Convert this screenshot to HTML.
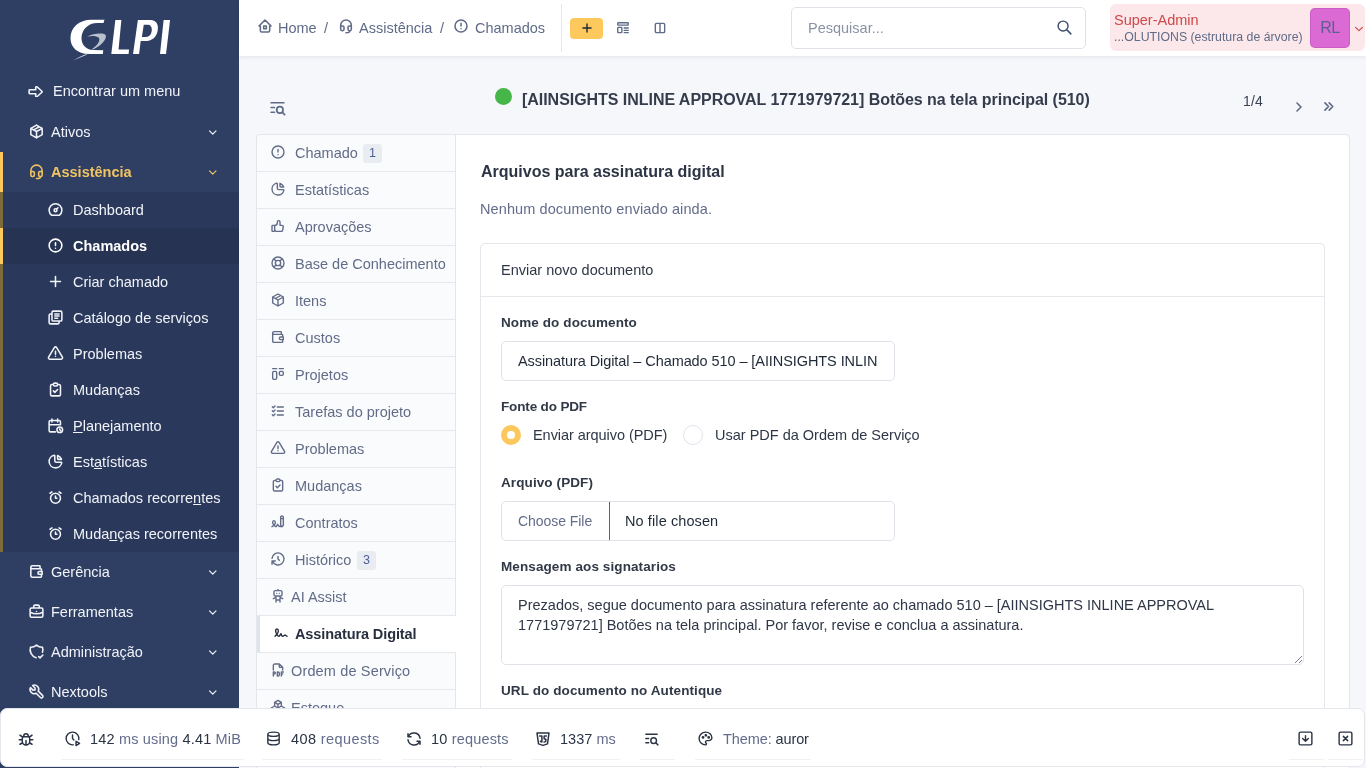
<!DOCTYPE html>
<html><head><meta charset="utf-8">
<style>
*{box-sizing:border-box;margin:0;padding:0}
html,body{will-change:transform;width:1366px;height:768px;overflow:hidden;background:#f5f7fb;font-family:"Liberation Sans",sans-serif;font-size:14.5px;color:#1f2937}
.abs{position:absolute}
svg.i{position:absolute;fill:none;stroke:currentColor;stroke-width:2;stroke-linecap:round;stroke-linejoin:round}
#side{position:absolute;left:0;top:0;width:239px;height:768px;background:#2f3f64;color:#f1f3f8}
.mi{position:absolute;left:0;width:239px;height:40px;line-height:40px;white-space:nowrap}
.mi span{position:absolute;left:51px}
.mi svg.i{left:27.5px;top:11px;width:17px;height:17px;stroke-width:2.2}
.mi svg.chev{position:absolute;left:209px;top:18px;width:7.5px;height:5px;stroke-width:2.3}
#sub{position:absolute;left:0;top:192px;width:239px;height:360px;background:#2a395b;border-left:3px solid #7d6b3b}
.si{position:absolute;left:0;width:236px;height:36px;line-height:36px;white-space:nowrap}
.si span{position:absolute;left:70px}
.si svg.i{left:44px;top:9px;width:17px;height:17px;stroke-width:2.2}
#hdr{position:absolute;left:239px;top:0;width:1127px;height:56px;background:#fff;box-shadow:0 1px 4px rgba(30,41,59,.09)}
.bc{position:absolute;top:0;line-height:56px;color:#5f6b87;white-space:nowrap}

.tabs{position:absolute;left:256px;top:134px;width:200px;height:640px;border:1px solid #e3e6eb;border-right:none;border-radius:4px 0 0 0;background:#fafbfc;overflow:hidden}
.tab{position:absolute;left:0;width:199px;height:37px;border-bottom:1px solid #e6e8ec;line-height:36px;color:#626c88;white-space:nowrap}
.tab span{position:absolute;left:38px}
.tab svg.i{left:13px;top:9px;width:16px;height:16px;stroke-width:2.1}
.badge{position:absolute;top:9px;height:19px;line-height:19px;padding:0 6px;border-radius:3px;background:#e9ecf1;color:#4b5f98;font-size:12.5px}
#card{position:absolute;left:455px;top:134px;width:895px;height:700px;background:#fff;border:1px solid #e3e6eb;border-radius:0 5px 0 0}
.lbl{position:absolute;left:45px;font-weight:bold;font-size:13.5px;line-height:20px;color:#313947;white-space:nowrap;letter-spacing:.1px}
.inp{position:absolute;border:1px solid #dfe3e9;border-radius:5px;background:#fff;white-space:nowrap;overflow:hidden;color:#1f2937}
</style></head><body>
<div id="side">
  <svg class="abs" style="left:65px;top:14px" width="110" height="52" viewBox="0 0 1366 646">
    <path fill="#fff" d="M490 72 L478 112 L400 112 C290 112 210 190 205 290 C200 380 260 445 350 448 L475 450 L470 497 L300 497 C150 495 68 410 68 300 C68 170 170 72 330 72 Z"/>
    <path fill="#b9c0cd" d="M275 282 C350 240 470 230 505 260 C525 300 460 390 350 440 L330 440 C420 380 440 320 420 295 C390 270 330 270 275 282 Z"/>
    <path fill="#c9cfdb" d="M100 578 C160 540 220 510 290 490 L250 515 C200 535 150 558 100 578 Z"/>
    <path fill="#fff" d="M625 75 L700 75 L665 440 L795 440 L790 497 L575 497 Z"/>
    <path fill="#fff" fill-rule="evenodd" d="M905 75 L1060 75 C1140 75 1165 140 1150 210 C1135 290 1080 335 990 335 L940 335 L920 497 L845 497 Z M978 135 L955 285 L1005 285 C1060 285 1075 240 1078 200 C1080 160 1060 135 1030 135 Z"/>
    <path fill="#fff" d="M1225 75 L1305 75 L1255 497 L1180 497 Z"/>
  </svg>

  <div class="mi" style="top:71px"><svg class="i" style="height:11.5px;top:14.5px;left:28px;width:15.5px" preserveAspectRatio="none" viewBox="1.5 3.5 21 17"><path d="M4 9h8v-3.586a1 1 0 0 1 1.707 -.707l6.586 6.586a1 1 0 0 1 0 1.414l-6.586 6.586a1 1 0 0 1 -1.707 -.707v-3.586h-8a1 1 0 0 1 -1 -1v-4a1 1 0 0 1 1 -1z"/></svg><span style="left:53px">Encontrar um menu</span></div>
  <div class="mi" style="top:112px"><svg class="i" viewBox="0 0 24 24"><path d="M12 3l8 4.5l0 9l-8 4.5l-8 -4.5l0 -9l8 -4.5M12 12l8 -4.5M12 12l0 9M12 12l-8 -4.5M16 5.25l-8 4.5"/></svg><span>Ativos</span><svg class="i chev" viewBox="5 8 14 8"><path d="M6 9l6 6l6 -6"/></svg></div>
  <div class="mi" style="top:152px;color:#f2c461;font-weight:bold"><div class="abs" style="left:0;top:0;width:3px;height:40px;background:#fec95c"></div><svg class="i" viewBox="0 0 24 24"><path d="M4 14v-3a8 8 0 1 1 16 0v3M18 19c0 1.657 -2.686 3 -6 3M4 14a2 2 0 0 1 2 -2h1a2 2 0 0 1 2 2v3a2 2 0 0 1 -2 2h-1a2 2 0 0 1 -2 -2v-3zM15 14a2 2 0 0 1 2 -2h1a2 2 0 0 1 2 2v3a2 2 0 0 1 -2 2h-1a2 2 0 0 1 -2 -2v-3z"/></svg><span>Assistência</span><svg class="i chev" viewBox="5 8 14 8"><path d="M6 9l6 6l6 -6"/></svg></div>
  <div id="sub">
    <div class="si" style="top:0"><svg class="i" viewBox="0 0 24 24"><path d="M10 13a2 2 0 1 0 4 0a2 2 0 1 0 -4 0M13.45 11.55l2.05 -2.05M6.4 20a9 9 0 1 1 11.2 0z"/></svg><span>Dashboard</span></div>
    <div class="si" style="top:36px;background:#263352;font-weight:bold;color:#fff"><div class="abs" style="left:-3px;top:0;width:3px;height:36px;background:#fec95c"></div><svg class="i" viewBox="0 0 24 24"><path d="M3 12a9 9 0 1 0 18 0a9 9 0 0 0 -18 0M12 8v4M12 16h.01"/></svg><span>Chamados</span></div>
    <div class="si" style="top:72px"><svg class="i" viewBox="0 0 24 24"><path d="M12 5l0 14M5 12l14 0"/></svg><span>Criar chamado</span></div>
    <div class="si" style="top:108px"><svg class="i" viewBox="0 0 24 24"><path d="M9 3h10a2 2 0 0 1 2 2v10a2 2 0 0 1 -2 2h-10a2 2 0 0 1 -2 -2v-10a2 2 0 0 1 2 -2zM17 17v2a2 2 0 0 1 -2 2h-10a2 2 0 0 1 -2 -2v-10a2 2 0 0 1 2 -2h2M11 7h6M11 10h6M11 13h4"/></svg><span>Catálogo de serviços</span></div>
    <div class="si" style="top:144px"><svg class="i" viewBox="0 0 24 24"><path d="M12 9v4M10.363 3.591l-8.106 13.534a1.914 1.914 0 0 0 1.636 2.871h16.214a1.914 1.914 0 0 0 1.636 -2.87l-8.106 -13.536a1.914 1.914 0 0 0 -3.274 0zM12 16h.01"/></svg><span>Problemas</span></div>
    <div class="si" style="top:180px"><svg class="i" viewBox="0 0 24 24"><path d="M9 5h-2a2 2 0 0 0 -2 2v12a2 2 0 0 0 2 2h10a2 2 0 0 0 2 -2v-12a2 2 0 0 0 -2 -2h-2M11 3h2a2 2 0 0 1 2 2a2 2 0 0 1 -2 2h-2a2 2 0 0 1 -2 -2a2 2 0 0 1 2 -2zM9 14l2 2l4 -4"/></svg><span>Mudanças</span></div>
    <div class="si" style="top:216px"><svg class="i" viewBox="0 0 24 24"><path d="M11.795 21h-6.795a2 2 0 0 1 -2 -2v-12a2 2 0 0 1 2 -2h12a2 2 0 0 1 2 2v4M14 18a4 4 0 1 0 8 0a4 4 0 1 0 -8 0M15 3v4M7 3v4M3 11h16M18 16.496v1.504l1 1"/></svg><span><u>P</u>lanejamento</span></div>
    <div class="si" style="top:252px"><svg class="i" viewBox="0 0 24 24"><path d="M10 3.2a9 9 0 1 0 10.8 10.8a1 1 0 0 0 -1 -1h-6.8a2 2 0 0 1 -2 -2v-7a.9 .9 0 0 0 -1 -.8M15 3.5a9 9 0 0 1 5.5 5.5h-4.5a1 1 0 0 1 -1 -1v-4.5"/></svg><span>Est<u>a</u>tísticas</span></div>
    <div class="si" style="top:288px"><svg class="i" viewBox="0 0 24 24"><path d="M5 13a7 7 0 1 0 14 0a7 7 0 1 0 -14 0M12 10l0 3l2 0M7 4l-2.75 2M17 4l2.75 2"/></svg><span>Chamados recorre<u>n</u>tes</span></div>
    <div class="si" style="top:324px"><svg class="i" viewBox="0 0 24 24"><path d="M5 13a7 7 0 1 0 14 0a7 7 0 1 0 -14 0M12 10l0 3l2 0M7 4l-2.75 2M17 4l2.75 2"/></svg><span>Muda<u>n</u>ças recorrentes</span></div>
  </div>
  <div class="mi" style="top:552px"><svg class="i" viewBox="0 0 24 24"><path d="M17 8v-3a1 1 0 0 0 -1 -1h-10a2 2 0 0 0 0 4h12a1 1 0 0 1 1 1v3m0 4v3a1 1 0 0 1 -1 1h-12a2 2 0 0 1 -2 -2v-12M20 12v4h-4a2 2 0 0 1 0 -4h4"/></svg><span>Gerência</span><svg class="i chev" viewBox="5 8 14 8"><path d="M6 9l6 6l6 -6"/></svg></div>
  <div class="mi" style="top:592px"><svg class="i" viewBox="0 0 24 24"><path d="M5 7h14a2 2 0 0 1 2 2v9a2 2 0 0 1 -2 2h-14a2 2 0 0 1 -2 -2v-9a2 2 0 0 1 2 -2zM8 7v-2a2 2 0 0 1 2 -2h4a2 2 0 0 1 2 2v2M12 12l0 .01M3 13a20 20 0 0 0 18 0"/></svg><span>Ferramentas</span><svg class="i chev" viewBox="5 8 14 8"><path d="M6 9l6 6l6 -6"/></svg></div>
  <div class="mi" style="top:632px"><svg class="i" viewBox="0 0 24 24"><path d="M11.46 20.846a12 12 0 0 1 -7.96 -14.846a12 12 0 0 0 8.5 -3a12 12 0 0 0 8.5 3a12 12 0 0 1 -.09 7.06M15 19l2 2l4 -4"/></svg><span>Administração</span><svg class="i chev" viewBox="5 8 14 8"><path d="M6 9l6 6l6 -6"/></svg></div>
  <div class="mi" style="top:672px"><svg class="i" viewBox="0 0 24 24"><path d="M7 10h3v-3l-3.5 -3.5a6 6 0 0 1 8 8l6 6a2 2 0 0 1 -3 3l-6 -6a6 6 0 0 1 -8 -8l3.5 3.5"/></svg><span>Nextools</span><svg class="i chev" viewBox="5 8 14 8"><path d="M6 9l6 6l6 -6"/></svg></div>
</div>
<div id="hdr">
  <svg class="i" style="left:18px;top:18px;width:16px;height:16px;color:#5f6b87;stroke-width:2.3" viewBox="0 0 24 24"><path d="M5 12l-2 0l9 -9l9 9l-2 0M5 12v7a2 2 0 0 0 2 2h10a2 2 0 0 0 2 -2v-7M10 12h4v4h-4z"/></svg>
  <div class="bc" style="left:39px">Home</div>
  <div class="bc" style="left:85px">/</div>
  <svg class="i" style="left:99px;top:18px;width:16px;height:16px;color:#5f6b87;stroke-width:2.3" viewBox="0 0 24 24"><path d="M4 14v-3a8 8 0 1 1 16 0v3M18 19c0 1.657 -2.686 3 -6 3M4 14a2 2 0 0 1 2 -2h1a2 2 0 0 1 2 2v3a2 2 0 0 1 -2 2h-1a2 2 0 0 1 -2 -2v-3zM15 14a2 2 0 0 1 2 -2h1a2 2 0 0 1 2 2v3a2 2 0 0 1 -2 2h-1a2 2 0 0 1 -2 -2v-3z"/></svg>
  <div class="bc" style="left:120px">Assistência</div>
  <div class="bc" style="left:201px">/</div>
  <svg class="i" style="left:214px;top:18px;width:16px;height:16px;color:#5f6b87;stroke-width:2.3" viewBox="0 0 24 24"><path d="M3 12a9 9 0 1 0 18 0a9 9 0 0 0 -18 0M12 8v4M12 16h.01"/></svg>
  <div class="bc" style="left:236px">Chamados</div>
  <div class="abs" style="left:322px;top:4px;width:1px;height:48px;background:#e5e6e8"></div>
  <div class="abs" style="left:331px;top:18px;width:33px;height:21px;background:#fec95c;border-radius:4px"></div>
  <svg class="i" style="left:341px;top:21px;width:14px;height:14px;color:#1f2937;stroke-width:2.4" viewBox="0 0 24 24"><path d="M12 5l0 14M5 12l14 0"/></svg>
  <svg class="i" style="left:377px;top:21px;width:14px;height:14px;color:#5f6b87;stroke-width:2.4" viewBox="0 0 24 24"><path d="M4 3h16a1 1 0 0 1 1 1v2a1 1 0 0 1 -1 1h-16a1 1 0 0 1 -1 -1v-2a1 1 0 0 1 1 -1zM4 11h5a1 1 0 0 1 1 1v7a1 1 0 0 1 -1 1h-5a1 1 0 0 1 -1 -1v-7a1 1 0 0 1 1 -1zM14 12h7M14 16h7M14 20h7"/></svg>
  <svg class="i" style="left:414px;top:21px;width:14px;height:14px;color:#5f6b87;stroke-width:2.4" viewBox="0 0 24 24"><path d="M6 4h12a2 2 0 0 1 2 2v12a2 2 0 0 1 -2 2h-12a2 2 0 0 1 -2 -2v-12a2 2 0 0 1 2 -2zM12 4l0 16"/></svg>
  <div class="abs" style="left:552px;top:7px;width:295px;height:42px;border:1px solid #dfe3e9;border-radius:5px;background:#fff"></div>
  <div class="abs" style="left:569px;top:0;line-height:56px;color:#8a93a6">Pesquisar...</div>
  <svg class="i" style="left:817px;top:19px;width:17px;height:17px;color:#3a4b70" viewBox="0 0 24 24"><path d="M3 10a7 7 0 1 0 14 0a7 7 0 1 0 -14 0M21 21l-6 -6"/></svg>
  <div class="abs" style="left:871px;top:4px;width:255px;height:47px;background:#fce8ea;border-radius:6px"></div>
  <div class="abs" style="left:875px;top:10px;line-height:20px;color:#d04848;white-space:nowrap">Super-Admin</div>
  <div class="abs" style="left:875px;top:29px;line-height:16px;font-size:12.3px;color:#5f6b87;white-space:nowrap">...OLUTIONS (estrutura de árvore)</div>
  <div class="abs" style="left:1071px;top:8px;width:40px;height:40px;background:#db6ad4;border-radius:5px;box-shadow:inset 0 0 0 1px rgba(160,50,150,.25);color:#5a6192;font-size:16px;letter-spacing:-.6px;line-height:40px;text-align:center">RL</div>
  <svg class="i" style="left:1116px;top:26px;width:8px;height:6px;color:#d04848" viewBox="5 8 14 8"><path d="M6 9l6 6l6 -6"/></svg>
</div>
<div class="abs" style="left:495px;top:88px;width:17px;height:17px;border-radius:50%;background:#47b649"></div>
<div class="abs" style="left:522px;top:86px;line-height:28px;font-size:16px;font-weight:bold;color:#353d4d;white-space:nowrap;letter-spacing:-.04px">[AIINSIGHTS INLINE APPROVAL 1771979721] Botões na tela principal (510)</div>
<div class="abs" style="left:1243px;top:91px;line-height:20px;color:#3a4252;font-size:14px;letter-spacing:.2px">1/4</div>
<svg class="i" style="left:1291px;top:99px;width:16px;height:16px;color:#5f6b87;stroke-width:2.4" viewBox="0 0 24 24"><path d="M9 6l6 6l-6 6"/></svg>
<svg class="i" style="left:1320px;top:98px;width:17px;height:17px;color:#5f6b87;stroke-width:2.4" viewBox="0 0 24 24"><path d="M7 7l5 5l-5 5M13 7l5 5l-5 5"/></svg>
<svg class="i" style="left:268px;top:98px;width:19px;height:19px;color:#5f6b87;stroke-width:2.2" viewBox="0 0 24 24"><path d="M11 15a4 4 0 1 0 8 0a4 4 0 1 0 -8 0M18.5 18.5l2.5 2.5M4 6h16M4 12h4M4 18h4"/></svg>
<div class="tabs">
  <div class="tab" style="top:0px"><svg class="i" viewBox="0 0 24 24"><path d="M3 12a9 9 0 1 0 18 0a9 9 0 0 0 -18 0M12 8v4M12 16h.01"/></svg><span>Chamado</span><div class="badge" style="left:106px">1</div></div>
  <div class="tab" style="top:37px"><svg class="i" viewBox="0 0 24 24"><path d="M10 3.2a9 9 0 1 0 10.8 10.8a1 1 0 0 0 -1 -1h-6.8a2 2 0 0 1 -2 -2v-7a.9 .9 0 0 0 -1 -.8M15 3.5a9 9 0 0 1 5.5 5.5h-4.5a1 1 0 0 1 -1 -1v-4.5"/></svg><span>Estatísticas</span></div>
  <div class="tab" style="top:74px"><svg class="i" viewBox="0 0 24 24"><path d="M7 11v8a1 1 0 0 1 -1 1h-2a1 1 0 0 1 -1 -1v-7a1 1 0 0 1 1 -1h3a4 4 0 0 0 4 -4v-1a2 2 0 0 1 4 0v5h3a2 2 0 0 1 2 2l-1 5a2 3 0 0 1 -2 2h-7a3 3 0 0 1 -3 -3"/></svg><span>Aprovações</span></div>
  <div class="tab" style="top:111px"><svg class="i" viewBox="0 0 24 24"><path d="M8 12a4 4 0 1 0 8 0a4 4 0 1 0 -8 0M3 12a9 9 0 1 0 18 0a9 9 0 1 0 -18 0M15 15l3.35 3.35M9 15l-3.35 3.35M5.65 5.65l3.35 3.35M18.35 5.65l-3.35 3.35"/></svg><span>Base de Conhecimento</span></div>
  <div class="tab" style="top:148px"><svg class="i" viewBox="0 0 24 24"><path d="M12 3l8 4.5l0 9l-8 4.5l-8 -4.5l0 -9l8 -4.5M12 12l8 -4.5M12 12l0 9M12 12l-8 -4.5M16 5.25l-8 4.5"/></svg><span>Itens</span></div>
  <div class="tab" style="top:185px"><svg class="i" viewBox="0 0 24 24"><path d="M17 8v-3a1 1 0 0 0 -1 -1h-10a2 2 0 0 0 0 4h12a1 1 0 0 1 1 1v3m0 4v3a1 1 0 0 1 -1 1h-12a2 2 0 0 1 -2 -2v-12M20 12v4h-4a2 2 0 0 1 0 -4h4"/></svg><span>Custos</span></div>
  <div class="tab" style="top:222px"><svg class="i" viewBox="0 0 24 24"><path d="M4 4l6 0M14 4l6 0M6 8h2a2 2 0 0 1 2 2v8a2 2 0 0 1 -2 2h-2a2 2 0 0 1 -2 -2v-8a2 2 0 0 1 2 -2zM16 8h2a2 2 0 0 1 2 2v2a2 2 0 0 1 -2 2h-2a2 2 0 0 1 -2 -2v-2a2 2 0 0 1 2 -2z"/></svg><span>Projetos</span></div>
  <div class="tab" style="top:259px"><svg class="i" viewBox="0 0 24 24"><path d="M3.5 5.5l1.5 1.5l2.5 -2.5M3.5 11.5l1.5 1.5l2.5 -2.5M3.5 17.5l1.5 1.5l2.5 -2.5M11 6l9 0M11 12l9 0M11 18l9 0"/></svg><span>Tarefas do projeto</span></div>
  <div class="tab" style="top:296px"><svg class="i" viewBox="0 0 24 24"><path d="M12 9v4M10.363 3.591l-8.106 13.534a1.914 1.914 0 0 0 1.636 2.871h16.214a1.914 1.914 0 0 0 1.636 -2.87l-8.106 -13.536a1.914 1.914 0 0 0 -3.274 0zM12 16h.01"/></svg><span>Problemas</span></div>
  <div class="tab" style="top:333px"><svg class="i" viewBox="0 0 24 24"><path d="M9 5h-2a2 2 0 0 0 -2 2v12a2 2 0 0 0 2 2h10a2 2 0 0 0 2 -2v-12a2 2 0 0 0 -2 -2h-2M11 3h2a2 2 0 0 1 2 2a2 2 0 0 1 -2 2h-2a2 2 0 0 1 -2 -2a2 2 0 0 1 2 -2zM9 14l2 2l4 -4"/></svg><span>Mudanças</span></div>
  <div class="tab" style="top:370px"><svg class="i" viewBox="0 0 24 24"><path d="M3 19c3.333 -2 5 -4 5 -6c0 -3 -1 -3 -2 -3s-2.032 1.085 -2 3c.034 2.048 1.658 2.877 2.5 4c1.5 2 2.5 2.5 3.5 1c.667 -1 1.167 -1.833 1.5 -2.5c1 2.333 2.333 3.5 4 3.5h2.5M20 17v-12c0 -1.121 -.879 -2 -2 -2s-2 .879 -2 2v12l2 2l2 -2zM16 7h4"/></svg><span>Contratos</span></div>
  <div class="tab" style="top:407px"><svg class="i" viewBox="0 0 24 24"><path d="M12 8l0 4l2 2M3.05 11a9 9 0 1 1 .5 4m-.5 5v-5h5"/></svg><span>Histórico</span><div class="badge" style="left:100px">3</div></div>
  <div class="tab" style="top:444px"><svg class="i" viewBox="0 0 24 24"><path d="M8 4h8a2 2 0 0 1 2 2v4a2 2 0 0 1 -2 2h-8a2 2 0 0 1 -2 -2v-4a2 2 0 0 1 2 -2zM12 2v2M9 12v9M15 12v9M5 16l4 -2M15 14l4 2M9 18h6M10 8v.01M14 8v.01"/></svg><span style="left:34px">AI Assist</span></div>
  <div class="tab" style="top:481px;height:37px;width:200px;background:#fff;border-bottom:1px solid #e6e8ec;border-left:4px solid #dfe3ea;color:#283040;font-weight:bold;left:-1px"><svg class="i" style="left:13px" viewBox="0 0 24 24"><path d="M3 17c3.333 -3.333 5 -6 5 -8c0 -3 -1 -3 -2 -3s-2.032 1.085 -2 3c.034 2.048 1.658 4.877 2.5 6c1.5 2 2.5 2.5 3.5 1l2 -3c.333 2.667 1.333 4 3 4c.53 0 2.639 -2 3 -2c.517 0 1.517 .667 3 2"/></svg><span style="left:35px;letter-spacing:-.1px">Assinatura Digital</span></div>
  <div class="tab" style="top:518px"><svg class="i" viewBox="0 0 24 24"><path d="M14 3v4a1 1 0 0 0 1 1h4M5 12v-7a2 2 0 0 1 2 -2h7l5 5v4M5 18h1.5a1.5 1.5 0 0 0 0 -3h-1.5v6M17 18h2M20 15h-3v6M11 15v6h1a2 2 0 0 0 2 -2v-2a2 2 0 0 0 -2 -2h-1z"/></svg><span style="left:34px;letter-spacing:.15px">Ordem de Serviço</span></div>
  <div class="tab" style="top:555px"><svg class="i" viewBox="0 0 24 24"><path d="M7 16.5l-5 -3l5 -3l5 3v5.5l-5 3zM2 13.5v5.5l5 3M7 16.545l5 -3.03M17 16.5l-5 -3l5 -3l5 3v5.5l-5 3zM12 19l5 3M17 16.5l5 -3M12 13.5v-5.5l-5 -3l5 -3l5 3v5.5M7 5.03v5.455M12 8l5 -3"/></svg><span style="left:34px">Estoque</span></div>
</div>
<div id="card">
  <div class="abs" style="left:25px;top:23px;line-height:28px;font-size:16px;font-weight:bold;color:#2d3545;white-space:nowrap">Arquivos para assinatura digital</div>
  <div class="abs" style="left:24px;top:64px;line-height:20px;font-size:14.5px;color:#646c8c;white-space:nowrap;letter-spacing:.1px">Nenhum documento enviado ainda.</div>
  <div class="abs" style="left:24px;top:108px;width:845px;height:700px;border:1px solid #e3e6eb;border-radius:5px">
    <div class="abs" style="left:0;top:0;width:843px;height:53px;border-bottom:1px solid #e6e8ec"></div>
    <div class="abs" style="left:20px;top:16px;line-height:20px;color:#2f3747;white-space:nowrap">Enviar novo documento</div>
    <div class="lbl" style="left:20px;top:69px">Nome do documento</div>
    <div class="inp" style="left:20px;top:97px;width:394px;height:40px"><div class="abs" style="left:16px;top:9px;width:360px;overflow:hidden;line-height:20px;letter-spacing:-.08px">Assinatura Digital – Chamado 510 – [AIINSIGHTS INLINE APPROVAL 1771979721] Botões na tela principal</div></div>
    <div class="lbl" style="left:20px;top:153px;letter-spacing:-.15px">Fonte do PDF</div>
    <div class="abs" style="left:20px;top:181px;width:20px;height:20px;border-radius:50%;background:#fcc75c"></div>
    <div class="abs" style="left:26px;top:187px;width:8px;height:8px;border-radius:50%;background:#fff"></div>
    <div class="abs" style="left:52px;top:181px;line-height:20px;color:#2f3747;white-space:nowrap;letter-spacing:-.05px">Enviar arquivo (PDF)</div>
    <div class="abs" style="left:202px;top:181px;width:20px;height:20px;border-radius:50%;border:1px solid #dfe3e9;background:#fff"></div>
    <div class="abs" style="left:234px;top:181px;line-height:20px;color:#2f3747;white-space:nowrap;letter-spacing:0px">Usar PDF da Ordem de Serviço</div>
    <div class="lbl" style="left:20px;top:229px">Arquivo (PDF)</div>
    <div class="inp" style="left:20px;top:257px;width:394px;height:40px">
      <div class="abs" style="left:16px;top:9px;line-height:20px;color:#646c8c;font-size:14px;letter-spacing:-.05px">Choose File</div>
      <div class="abs" style="left:107px;top:0;width:1px;height:38px;background:#56617a"></div>
      <div class="abs" style="left:123px;top:9px;line-height:20px;color:#1f2937;letter-spacing:.1px">No file chosen</div>
    </div>
    <div class="lbl" style="left:20px;top:313px">Mensagem aos signatarios</div>
    <div class="inp" style="left:20px;top:341px;width:803px;height:80px">
      <div class="abs" style="left:16px;top:9px;line-height:20px;color:#2f3747">Prezados, segue documento para assinatura referente ao chamado 510 – [AIINSIGHTS INLINE APPROVAL<br>1771979721] Botões na tela principal. Por favor, revise e conclua a assinatura.</div>
      <svg class="abs" style="left:791px;top:68px" width="10" height="10" viewBox="0 0 10 10"><path d="M9 2L2 9M9 6L6 9" stroke="#7a8294" stroke-width="1"/></svg>
    </div>
    <div class="lbl" style="left:20px;top:437px">URL do documento no Autentique</div>
  </div>
</div>
<div class="abs" style="left:455px;top:616px;width:1px;height:36px;background:#fff"></div>
<div class="abs" style="left:0;top:708px;width:1365px;height:59px;background:#fff;border:1px solid #e3e6eb;border-radius:7px;font-size:14.5px">
  <div class="abs" style="left:60px;top:50px;width:183px;height:1px;background:#f0f1f4;border-radius:1px"></div><div class="abs" style="left:261px;top:50px;width:120px;height:1px;background:#f0f1f4;border-radius:1px"></div><div class="abs" style="left:401px;top:50px;width:110px;height:1px;background:#f0f1f4;border-radius:1px"></div><div class="abs" style="left:531px;top:50px;width:88px;height:1px;background:#f0f1f4;border-radius:1px"></div><div class="abs" style="left:639px;top:50px;width:35px;height:1px;background:#f0f1f4;border-radius:1px"></div><div class="abs" style="left:694px;top:50px;width:116px;height:1px;background:#f0f1f4;border-radius:1px"></div><div class="abs" style="left:1288px;top:50px;width:35px;height:1px;background:#f0f1f4;border-radius:1px"></div><div class="abs" style="left:1327px;top:50px;width:35px;height:1px;background:#f0f1f4;border-radius:1px"></div>
  <svg class="i" style="left:16px;top:21px;width:18px;height:18px;color:#2b3445" viewBox="0 0 24 24"><path d="M9 9v-1a3 3 0 0 1 6 0v1M8 9h8a6 6 0 0 1 1 3v3a5 5 0 0 1 -10 0v-3a6 6 0 0 1 1 -3M3 13l4 0M17 13l4 0M12 20l0 -6M4 19l3.35 -2M20 19l-3.35 -2M4 7l3.75 2.4M20 7l-3.75 2.4"/></svg>
  <svg class="i" style="left:63px;top:21px;width:17px;height:17px;color:#2b3445" viewBox="0 0 24 24"><path d="M12 7v5l2 2M17 22l5 -3l-5 -3zM13.017 20.943a9 9 0 1 1 7.831 -7.292"/></svg>
  <div class="abs" style="left:89px;top:20px;line-height:20px;white-space:nowrap;color:#2b3445;letter-spacing:.17px">142 <span style="color:#646c8c">ms using</span> 4.41 <span style="color:#646c8c">MiB</span></div>
  <svg class="i" style="left:264px;top:21px;width:17px;height:17px;color:#2b3445" viewBox="0 0 24 24"><path d="M4 6a8 3 0 1 0 16 0a8 3 0 1 0 -16 0M4 6v6a8 3 0 0 0 16 0v-6M4 12v6a8 3 0 0 0 16 0v-6"/></svg>
  <div class="abs" style="left:290px;top:20px;line-height:20px;white-space:nowrap;color:#2b3445;letter-spacing:.4px">408 <span style="color:#646c8c">requests</span></div>
  <svg class="i" style="left:404px;top:21px;width:18px;height:18px;color:#2b3445" viewBox="0 0 24 24"><path d="M20 11a8.1 8.1 0 0 0 -15.5 -2m-.5 -4v4h4M4 13a8.1 8.1 0 0 0 15.5 2m.5 4v-4h-4"/></svg>
  <div class="abs" style="left:430px;top:20px;line-height:20px;white-space:nowrap;color:#2b3445;letter-spacing:.18px">10 <span style="color:#646c8c">requests</span></div>
  <svg class="i" style="left:533px;top:21px;width:18px;height:18px;color:#2b3445" viewBox="0 0 24 24"><path d="M20 4l-2 14.5l-6 2l-6 -2l-2 -14.5zM7.5 8h3v8l-2 -1M16.5 8h-2.5a.5 .5 0 0 0 -.5 .5v3a.5 .5 0 0 0 .5 .5h1.423a.5 .5 0 0 1 .495 .57l-.418 2.93l-2 .5"/></svg>
  <div class="abs" style="left:559px;top:20px;line-height:20px;white-space:nowrap;color:#2b3445;letter-spacing:.04px">1337 <span style="color:#646c8c">ms</span></div>
  <svg class="i" style="left:642px;top:21px;width:17px;height:17px;color:#2b3445" viewBox="0 0 24 24"><path d="M11 15a4 4 0 1 0 8 0a4 4 0 1 0 -8 0M18.5 18.5l2.5 2.5M4 6h16M4 12h4M4 18h4"/></svg>
  <svg class="i" style="left:696px;top:21px;width:17px;height:17px;color:#2b3445" viewBox="0 0 24 24"><path d="M12 21a9 9 0 0 1 0 -18c4.97 0 9 3.582 9 8c0 1.06 -.474 2.078 -1.318 2.828c-.844 .75 -1.989 1.172 -3.182 1.172h-2.5a2 2 0 0 0 -1 3.75a1.3 1.3 0 0 1 -1 2.25M7.5 10.5a1 1 0 1 0 2 0a1 1 0 1 0 -2 0M11.5 7.5a1 1 0 1 0 2 0a1 1 0 1 0 -2 0M15.5 10.5a1 1 0 1 0 2 0a1 1 0 1 0 -2 0"/></svg>
  <div class="abs" style="left:722px;top:20px;line-height:20px;white-space:nowrap;color:#2b3445;letter-spacing:-.1px"><span style="color:#646c8c">Theme:</span> auror</div>
  <svg class="i" style="left:1296px;top:21px;width:17px;height:17px;color:#2b3445" viewBox="0 0 24 24"><path d="M8 12l4 4l4 -4M12 8v8M5 3h14a2 2 0 0 1 2 2v14a2 2 0 0 1 -2 2h-14a2 2 0 0 1 -2 -2v-14a2 2 0 0 1 2 -2z"/></svg>
  <svg class="i" style="left:1336px;top:21px;width:17px;height:17px;color:#2b3445" viewBox="0 0 24 24"><path d="M5 3h14a2 2 0 0 1 2 2v14a2 2 0 0 1 -2 2h-14a2 2 0 0 1 -2 -2v-14a2 2 0 0 1 2 -2zM9 9l6 6m0 -6l-6 6"/></svg>
</div>
</body></html>
